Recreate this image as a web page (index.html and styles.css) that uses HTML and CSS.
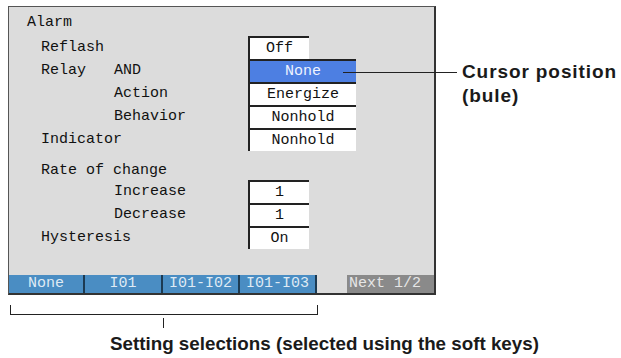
FILE: index.html
```html
<!DOCTYPE html>
<html lang="en">
<head>
    <meta charset="UTF-8">
    <title>Alarm settings</title>
    <link rel="stylesheet" href="styles.css">
</head>
<body>
    <div class="top">
        <!-- 设定画面 -->
        <div class="screen">
            <div class="title">Alarm</div>
            <div class="row"><span class="lab l2">Reflash</span><span class="val">Off</span></div>
            <div class="row"><span class="lab l2"><span class="w">Relay</span>AND</span><span class="val wide cursor">None</span></div>
            <div class="row"><span class="lab l3">Action</span><span class="val wide">Energize</span></div>
            <div class="row"><span class="lab l3">Behavior</span><span class="val wide">Nonhold</span></div>
            <div class="row"><span class="lab l2">Indicator</span><span class="val wide">Nonhold</span></div>
            <div class="sub">Rate of change</div>
            <div class="row"><span class="lab l3">Increase</span><span class="val">1</span></div>
            <div class="row"><span class="lab l3">Decrease</span><span class="val">1</span></div>
            <div class="row"><span class="lab l2">Hysteresis</span><span class="val">On</span></div>
            <!-- 软键 -->
            <div class="keys">
                <span class="key k1">None</span>
                <span class="key k2">I01</span>
                <span class="key k3">I01-I02</span>
                <span class="key k4">I01-I03</span>
                <span class="next">Next 1/2</span>
            </div>
            <div class="pointer"></div>
        </div>
        <div class="note">Cursor position<br>(bule)</div>
    </div>
    <svg class="bracket" width="330" height="35" viewBox="0 0 330 35">
        <path d="M10.5 10 V20 M10 19.5 H318 M317.5 10 V20 M163.5 23 V33" stroke="#222" stroke-width="1" fill="none"/>
    </svg>
    <div class="caption">Setting selections (selected using the soft keys)</div>
</body>
</html>
```

FILE: styles.css
```css
*{
    margin: 0;
    padding: 0;
    box-sizing: border-box;
}
body{
    background: #fff;
    font-family: "Liberation Sans", Arial, sans-serif;
}
.top{
    display: flex;
    align-items: flex-start;
}
.screen{
    position: relative;
    display: flex;
    flex-direction: column;
    width: 428px;
    height: 289px;
    margin: 6px 0 0 8px;
    background: #dcdcdc;
    border-top: 1px solid #555;
    border-left: 1px solid #555;
    border-right: 2px solid #333;
    border-bottom: 2px solid #333;
    font-family: "Liberation Mono", "DejaVu Sans Mono", monospace;
    font-size: 15px;
    color: #111;
}
.title{
    height: 23px;
    line-height: 23px;
    margin: 4px 0 2px;
    padding-left: 18px;
}
.sub{
    height: 18px;
    line-height: 18px;
    margin-top: 11px;
    padding-left: 32px;
}
.row{
    display: flex;
    height: 23px;
}
.lab{
    width: 239px;
    line-height: 23px;
    white-space: pre;
}
.l2{
    padding-left: 32px;
}
.l3{
    padding-left: 105px;
}
.lab .w{
    display: inline-block;
    width: 73px;
}
.val{
    width: 61px;
    height: 23px;
    line-height: 21px;
    text-align: center;
    background: #fff;
    border-top: 2px solid #222;
    border-left: 2px solid #222;
}
.val.wide{
    width: 108px;
}
.val.cursor{
    background: #4d7fe2;
    color: #eef3ff;
}
.keys{
    display: flex;
    margin-top: auto;
    height: 18px;
    line-height: 18px;
}
.key{
    height: 18px;
    text-align: center;
    background: #4a8dc3;
    color: #dfeaf4;
    border-right: 2px solid #1c3a52;
}
.k1{ width: 76px; }
.k2{ width: 78px; }
.k3{ width: 77px; }
.k4{ width: 77px; }
.next{
    width: 87px;
    margin-left: 30px;
    padding-left: 2px;
    background: #8a8a8a;
    color: #e6e6e6;
}
.pointer{
    position: absolute;
    left: 334px;
    top: 65px;
    width: 114px;
    height: 1px;
    background: #222;
}
.note{
    margin: 60px 0 0 26px;
    font-size: 19px;
    line-height: 24px;
    letter-spacing: 0.9px;
    font-weight: bold;
    color: #1a1a1a;
    white-space: nowrap;
}
.bracket{
    display: block;
}
.caption{
    margin-top: 2px;
    padding-left: 110px;
    font-size: 18.8px;
    line-height: 24px;
    font-weight: bold;
    color: #1a1a1a;
    white-space: nowrap;
}
```
